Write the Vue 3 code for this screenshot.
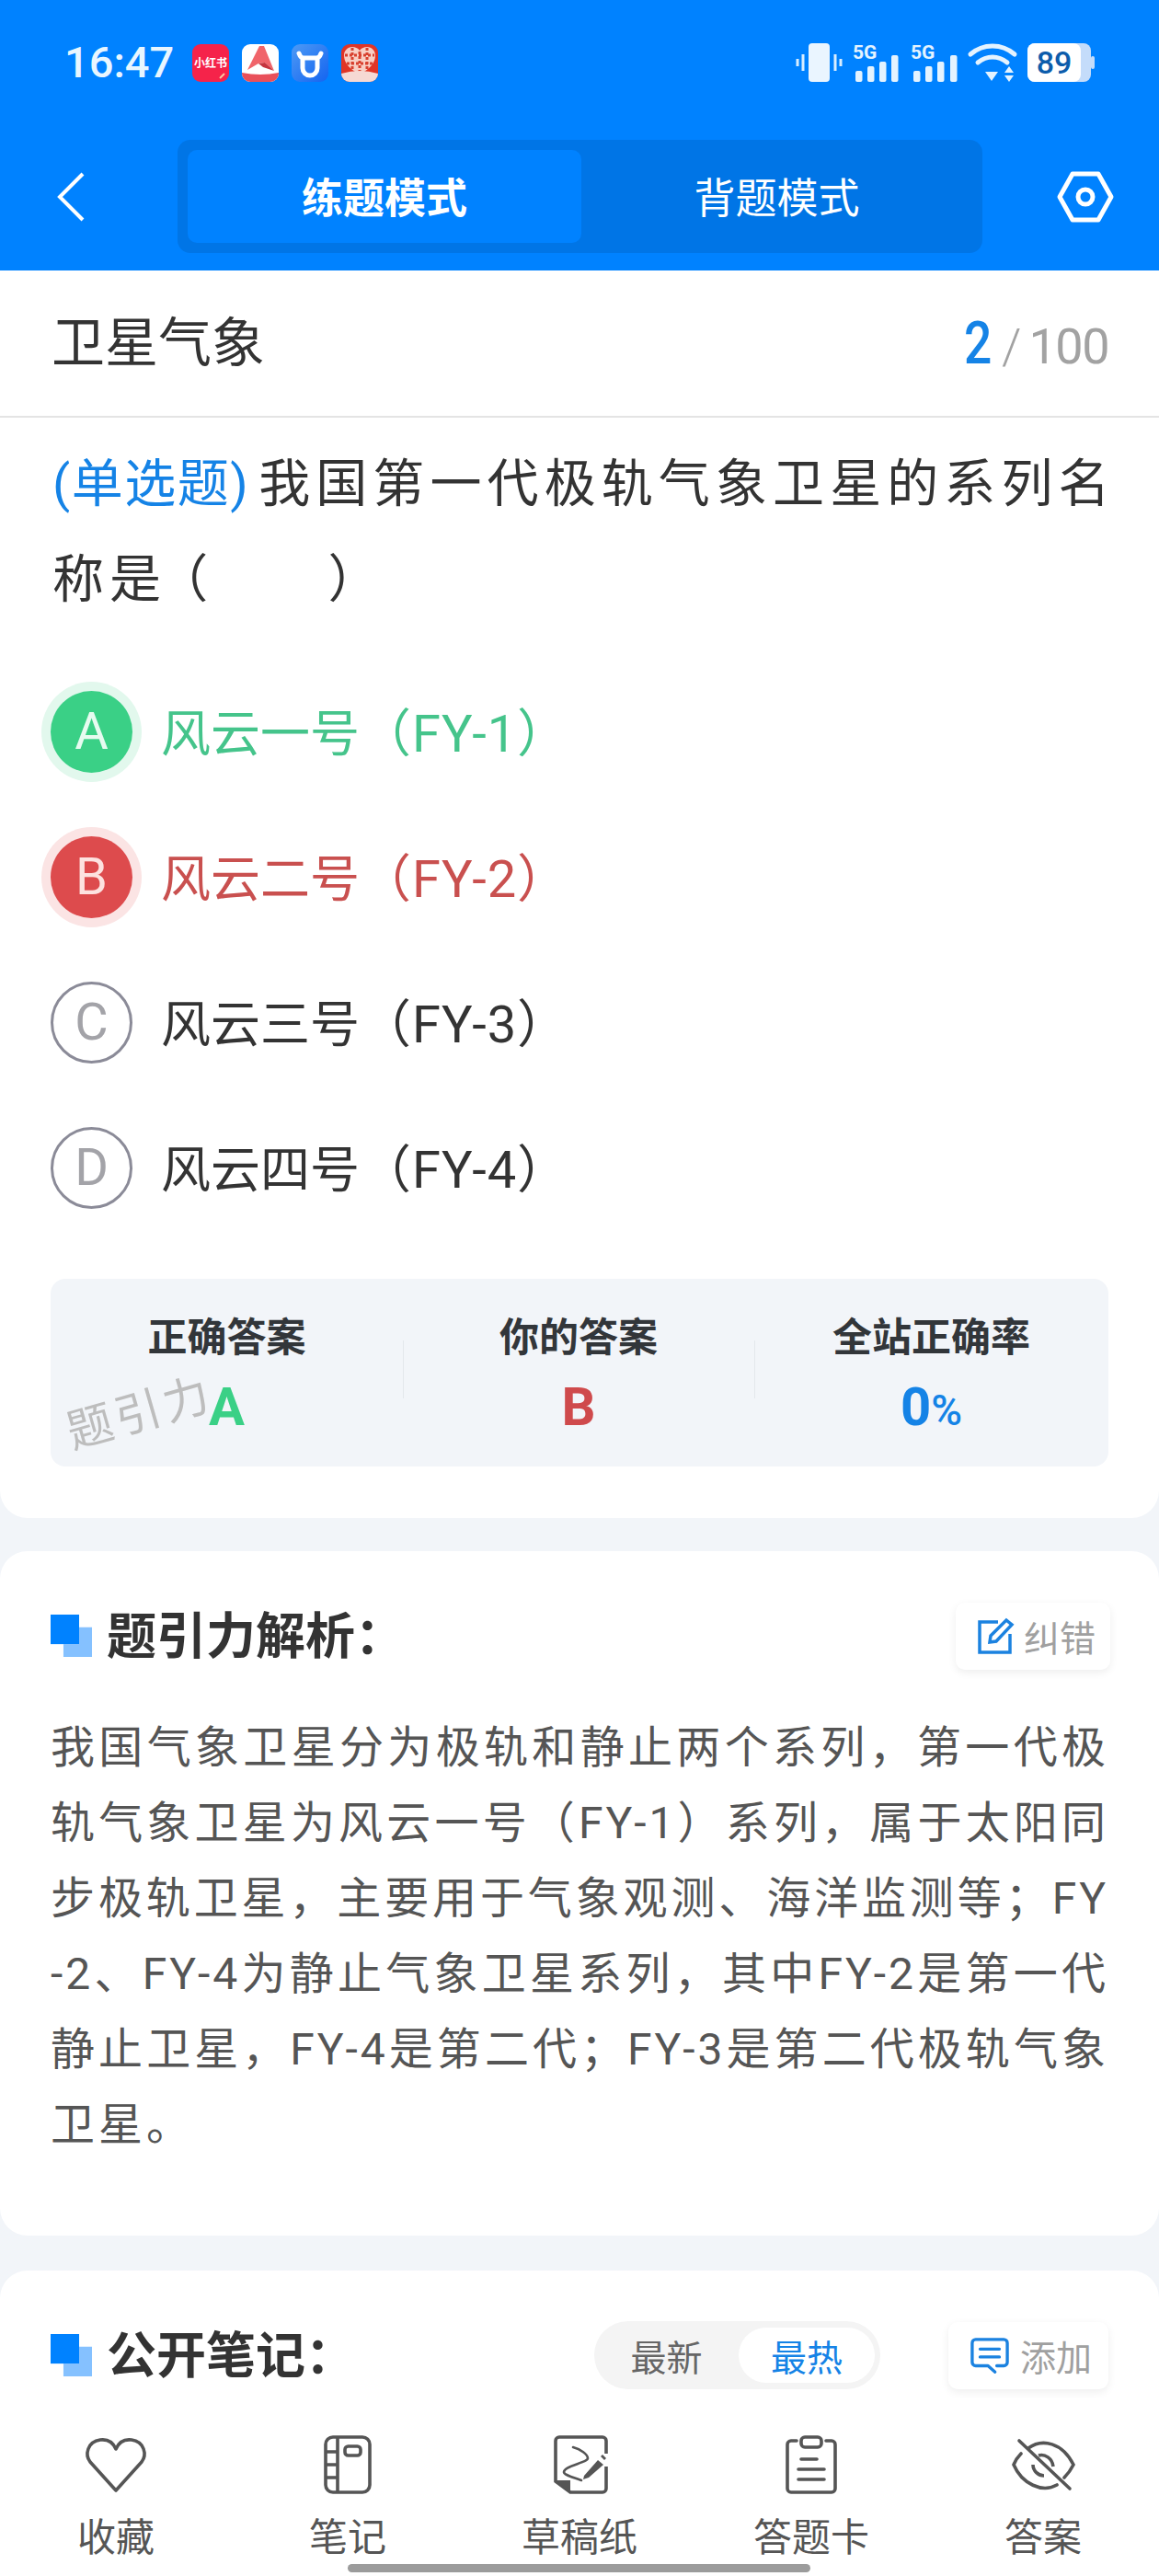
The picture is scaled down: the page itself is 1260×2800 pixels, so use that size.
<template>
  <div class="app">
    <header class="head">
      <div class="status">
        <span class="time">16:47</span>
        <div class="notifs">
          <svg class="notif" viewBox="0 0 40 41">
            <rect width="40" height="41" rx="9" fill="#f5234a" />
            <text x="20" y="25" text-anchor="middle" font-size="12" font-weight="700" fill="#fff" font-family="Noto Sans CJK SC">小红书</text>
            <path d="M30 37l5-5" stroke="#f8c9a0" stroke-width="2" />
          </svg>
          <svg class="notif" viewBox="0 0 40 41">
            <rect width="40" height="41" rx="9" fill="#fff" />
            <path d="M0 31q20 4 40 0v1a9 9 0 0 1-9 9H9a9 9 0 0 1-9-9z" fill="#e9505a" />
            <path d="M6 28 19 2h5l11 27-10-9-7 1z" fill="#f0646a" />
            <path d="M18 21l7-1 10 9-12-4z" fill="#c5343e" />
          </svg>
          <svg class="notif" viewBox="0 0 40 41">
            <defs>
              <linearGradient id="blueIcon" x1="0" y1="0" x2="1" y2="1">
                <stop offset="0" stop-color="#4d9af5" />
                <stop offset="1" stop-color="#1464f0" />
              </linearGradient>
            </defs>
            <rect width="40" height="41" rx="9" fill="url(#blueIcon)" />
            <path d="M8 10c1 3 3 5 5 5h14c2 0 4-2 5-5M12 15v11a8 8 0 0 0 16 0V15" fill="none" stroke="#fff" stroke-width="5" stroke-linecap="round" />
          </svg>
          <svg class="notif" viewBox="0 0 40 41">
            <rect width="40" height="41" rx="9" fill="#e03526" />
            <path d="M20 33C8 26 3 20 3 12c0-5 4-9 9-9 3 0 6 1 8 4 2-3 5-4 8-4 5 0 9 4 9 9 0 8-5 14-17 21z" fill="#f8cfc4" />
            <path d="M12 4v25M28 4v25M4 12h32M6 21h28M20 8v24" stroke="#d8412f" stroke-width="3" stroke-dasharray="3 2" />
            <path d="M0 32q20-6 40 0v0a9 9 0 0 1-9 9H9a9 9 0 0 1-9-9z" fill="#f6d9d3" />
          </svg>
        </div>
        <div class="sys">
          <svg class="sys-svg" viewBox="0 0 324 42">
            <rect x="13" y="0" width="23" height="42" rx="4" fill="#eaf5ff" />
            <path d="M7 12v18M1 17v8M42 12v18M48 17v8" stroke="#d8edff" stroke-width="3" />
            <text x="61" y="17" font-size="21" font-weight="700" fill="#e4f3ff" font-family="Roboto">5G</text>
            <g fill="#e4f3ff">
              <rect x="64" y="30" width="7.5" height="12" rx="2" />
              <rect x="77" y="25" width="7.5" height="17" rx="2" />
              <rect x="90" y="20" width="7.5" height="22" rx="2" />
              <rect x="103" y="13" width="7.5" height="29" rx="2" />
            </g>
            <text x="124" y="17" font-size="21" font-weight="700" fill="#e4f3ff" font-family="Roboto">5G</text>
            <g fill="#e4f3ff">
              <rect x="127" y="30" width="7.5" height="12" rx="2" />
              <rect x="140" y="25" width="7.5" height="17" rx="2" />
              <rect x="153" y="20" width="7.5" height="22" rx="2" />
              <rect x="167" y="13" width="7.5" height="29" rx="2" />
            </g>
            <path d="M189 12c14-12 34-12 48 0M197 21c10-8 22-8 32 0" fill="none" stroke="#e4f3ff" stroke-width="5" stroke-linecap="round" />
            <path d="M205 31h14l-7 10zM231 25l5 7h-10zM231 42l5-7h-10z" fill="#e4f3ff" />
            <rect x="251" y="0" width="69" height="42" rx="8" fill="#c4dcfa" />
            <rect x="251" y="0" width="58" height="42" rx="8" fill="#fff" />
            <rect x="320" y="14" width="4" height="14" rx="2" fill="#c4dcfa" />
            <text x="280" y="33" text-anchor="middle" font-size="34" font-weight="500" fill="#0c5cab" font-family="Roboto">89</text>
          </svg>
        </div>
      </div>
      <div class="bar">
        <svg class="back" viewBox="0 0 30 54"><path d="M28 2 3 27l25 25" fill="none" stroke="#fff" stroke-width="4" /></svg>
        <div class="tabs">
          <div class="tab active">练题模式</div>
          <div class="tab">背题模式</div>
        </div>
        <svg class="gear" viewBox="0 0 62 56">
          <path d="M17 3h28l14 25-14 25H17L3 28z" fill="none" stroke="#fff" stroke-width="5" stroke-linejoin="round" />
          <circle cx="31" cy="28" r="8" fill="none" stroke="#fff" stroke-width="5" />
        </svg>
      </div>
    </header>

    <main class="scroll">
      <section class="card first">
        <div class="title-row">
          <span class="subject">卫星气象</span>
          <span class="progress"><b>2</b><i>/</i><em>100</em></span>
        </div>
        <p class="question"><span class="qtype">(单选题)</span>我国第一代极轨气象卫星的系列名称是<span class="blank">（　　）</span></p>
        <div class="options">
          <div v-for="o in options" :key="o.key" class="option" :class="o.state">
            <span class="letter">{{ o.key }}</span>
            <span class="opt-text">{{ o.name }}<span class="opt-code">{{ o.code }}</span></span>
          </div>
        </div>
        <div class="stats">
          <div class="stat">
            <div class="stat-label">正确答案</div>
            <div class="stat-val green">A</div>
          </div>
          <div class="stat">
            <div class="stat-label">你的答案</div>
            <div class="stat-val red">B</div>
          </div>
          <div class="stat">
            <div class="stat-label">全站正确率</div>
            <div class="stat-val blue">0<small>%</small></div>
          </div>
          <span class="watermark">题引力</span>
        </div>
      </section>

      <section class="card analysis">
        <div class="sec-head">
          <span class="squares"></span>
          <h2>题引力解析：</h2>
          <div class="chip">
            <svg class="chip-icon" viewBox="0 0 40 40">
              <path d="M22 5H2v33h33V18" fill="none" stroke="#1b82e0" stroke-width="3.5" />
              <path d="M14 20 31 3l6 5-17 18-7 1z" fill="none" stroke="#1b82e0" stroke-width="3.5" />
            </svg>
            <span>纠错</span>
          </div>
        </div>
        <div class="para">
          <span v-for="(l, i) in lines" :key="i" class="line" :class="{ last: i === lines.length - 1 }">{{ l }}</span>
        </div>
      </section>

      <section class="card notes">
        <div class="sec-head">
          <span class="squares"></span>
          <h2>公开笔记：</h2>
          <div class="seg">
            <span class="seg-item">最新</span>
            <span class="seg-item on">最热</span>
          </div>
          <div class="chip add">
            <svg class="chip-icon wide" viewBox="0 0 44 44">
              <path d="M20 34H6a4 4 0 0 1-4-4V8a4 4 0 0 1 4-4h32a4 4 0 0 1 4 4v22a4 4 0 0 1-4 4h-8M20 34l8 7" fill="none" stroke="#1b82e0" stroke-width="3.5" stroke-linecap="round" stroke-linejoin="round" />
              <path d="M11 15h22M11 24h22" stroke="#1b82e0" stroke-width="3.5" stroke-linecap="round" />
            </svg>
            <span>添加</span>
          </div>
        </div>
      </section>
    </main>

    <nav class="nav">
      <div class="nav-item">
        <svg class="nav-icon" viewBox="0 0 70 66">
          <path d="M35 61 7 30C1 22 4 8 18 6c8-1 14 3 17 10 3-7 9-11 17-10 14 2 17 16 11 24z" fill="none" stroke="#555" stroke-width="3.6" stroke-linejoin="round" />
        </svg>
        <span>收藏</span>
      </div>
      <div class="nav-item">
        <svg class="nav-icon" viewBox="0 0 70 66">
          <rect x="11" y="3" width="48" height="60" rx="8" fill="none" stroke="#555" stroke-width="3.6" />
          <path d="M24 3v60M11 19h13M11 33h13M11 47h13" stroke="#555" stroke-width="3.6" />
          <rect x="32" y="13" width="17" height="10" rx="3.5" fill="none" stroke="#555" stroke-width="3.6" />
        </svg>
        <span>笔记</span>
      </div>
      <div class="nav-item">
        <svg class="nav-icon" viewBox="0 0 70 66">
          <path d="M64 21V7a4 4 0 0 0-4-4H13a4 4 0 0 0-4 4v44l16 12h35a4 4 0 0 0 4-4V35" fill="none" stroke="#555" stroke-width="3.6" />
          <path d="M10 50h15v14z" fill="#555" />
          <path d="M28 14c8 2 16 8 16 12 0 5-26 8-26 15 0 3 8 5 19 9" fill="none" stroke="#555" stroke-width="2.6" stroke-linecap="round" />
          <path d="M40 45 55 28l6 5-16 14-6 2zM58 24l2-2 4 4-2 2z" fill="#555" />
        </svg>
        <span>草稿纸</span>
      </div>
      <div class="nav-item">
        <svg class="nav-icon" viewBox="0 0 70 66">
          <path d="M19 7h-6a4 4 0 0 0-4 4v48a4 4 0 0 0 4 4h44a4 4 0 0 0 4-4V11a4 4 0 0 0-4-4h-6" fill="none" stroke="#555" stroke-width="3.6" stroke-linecap="round" />
          <rect x="24" y="3" width="22" height="11" rx="4" fill="none" stroke="#555" stroke-width="3.6" />
          <path d="M24 27h17M21 38h28M21 49h28" stroke="#555" stroke-width="3.6" stroke-linecap="round" />
        </svg>
        <span>答题卡</span>
      </div>
      <div class="nav-item">
        <svg class="nav-icon" viewBox="0 0 70 66">
          <path d="M9 7 64 59" stroke="#555" stroke-width="3.6" stroke-linecap="round" />
          <path d="M19 15C34 4 56 9 68 33c-3 6-6 10-10 14M50 55C34 64 12 54 3 33c2-5 5-9 8-12" fill="none" stroke="#555" stroke-width="3.6" stroke-linecap="round" />
          <path d="M30 23c7-2 15 3 16 12M24 33c0 7 6 12 12 12" fill="none" stroke="#555" stroke-width="3.6" />
        </svg>
        <span>答案</span>
      </div>
    </nav>
    <div class="home-bar"></div>
  </div>
</template>

<script setup>
const options = [
  { key: 'A', name: '风云一号', code: '（FY-1）', state: 'right' },
  { key: 'B', name: '风云二号', code: '（FY-2）', state: 'wrong' },
  { key: 'C', name: '风云三号', code: '（FY-3）', state: '' },
  { key: 'D', name: '风云四号', code: '（FY-4）', state: '' }
]

const lines = [
  '我国气象卫星分为极轨和静止两个系列，第一代极',
  '轨气象卫星为风云一号（FY-1）系列，属于太阳同',
  '步极轨卫星，主要用于气象观测、海洋监测等；FY',
  '-2、FY-4为静止气象卫星系列，其中FY-2是第一代',
  '静止卫星，FY-4是第二代；FY-3是第二代极轨气象',
  '卫星。'
]
</script>

<style>
body { background: #f2f5f9; }
</style>

<style scoped>
.app {
  width: 1260px; height: 2800px; position: relative; overflow: hidden;
  display: flex; flex-direction: column; background: #f2f5f9; color: #333;
  font-family: Roboto, "Noto Sans CJK SC", sans-serif;
}
.head { height: 294px; flex: none; background: #0082ff; color: #fff; }
.status { display: flex; align-items: center; height: 42px; padding: 47px 0 0 70px; }
.time { width: 139px; font-size: 47px; line-height: 42px; font-weight: 500; color: #e9f6ff; }
.notifs { display: flex; gap: 14px; }
.notif { width: 40px; height: 41px; display: block; }
.sys { margin-left: auto; margin-right: 70px; }
.sys-svg { width: 324px; height: 42px; display: block; overflow: visible; }
.bar { display: flex; align-items: center; height: 123px; margin-top: 63px; padding: 0 49px 0 62px; }
.back { width: 30px; height: 54px; flex: none; }
.tabs {
  width: 875px; height: 123px; box-sizing: border-box; margin-left: 101px; padding: 11px; flex: none;
  display: flex; background: #0075e6; border-radius: 14px;
}
.tab { width: 428px; display: flex; align-items: center; justify-content: center; font-size: 45px; padding-bottom: 2px; }
.tab.active { background: #0082ff; border-radius: 10px; font-weight: 700; }
.tab:last-child { flex: 1; }
.gear { width: 62px; height: 56px; margin-left: auto; flex: none; }

.scroll { flex: 1; min-height: 0; overflow: hidden; display: flex; flex-direction: column; gap: 36px; }
.card { background: #fff; border-radius: 30px; flex: none; }
.first { border-radius: 0 0 30px 30px; height: 1356px; }
.title-row {
  height: 158px; padding: 0 55px 0 56px; border-bottom: 2px solid #e4e4e4;
  display: flex; align-items: center; justify-content: space-between;
}
.subject { font-size: 58px; line-height: 1; color: #333; }
.progress { font-size: 54px; color: #a2a2a2; display: flex; align-items: baseline; }
.progress b { display: inline-block; width: 30px; font-size: 65px; font-weight: 500; color: #1583e6; transform: scaleX(0.82); transform-origin: left; }
.progress i { font-style: normal; margin: 0 8px 0 11px; font-weight: 300; }
.progress em { font-style: normal; letter-spacing: -1.5px; }
.question { margin: 20px 0 0; padding: 0 40px 0 57px; font-size: 56px; line-height: 104px; letter-spacing: 6.1px; color: #333; }
.qtype { color: #1583e6; letter-spacing: 1.5px; margin-right: 10px; }
.blank { margin-left: -11px; }
.options { margin-top: 34px; padding: 0 55px; }
.option { height: 158px; display: flex; align-items: center; gap: 31px; font-size: 54px; color: #333; }
.opt-text { padding-bottom: 6px; }
.opt-code { font-size: 56px; letter-spacing: 1px; }
.letter {
  width: 89px; height: 89px; box-sizing: border-box; border-radius: 50%; flex: none;
  display: flex; align-items: center; justify-content: center; font-size: 56px; font-weight: 400;
  border: 3px solid #8b8b98; color: #a3a3a8;
}
.right .letter { background: #3ad086; border: 0; color: #e6fbf0; box-shadow: 0 0 0 10px #e2f8ed; }
.right .opt-text { color: #45c48b; }
.wrong .letter { background: #dd4b4d; border: 0; color: #fde2e0; box-shadow: 0 0 0 10px #fbe4e4; }
.wrong .opt-text { color: #c9504f; }

.stats {
  position: relative; margin: 42px 55px 0; height: 204px; background: #f2f5f9; border-radius: 16px;
  display: grid; grid-template-columns: 383px 382px 385px;
}
.stat { position: relative; text-align: center; padding-top: 42px; }
.stat + .stat::before {
  content: ""; position: absolute; left: 0; top: 67px; height: 63px; width: 1px; background: #e4e8ec;
}
.stat-label { font-size: 43px; line-height: 44px; font-weight: 700; color: #32363a; }
.stat-val { font-size: 58px; line-height: 60px; margin-top: 23px; font-weight: 700; }
.stat-val small { font-size: 46px; font-weight: 500; }
.green { color: #3ad086; }
.red { color: #cf4a4c; }
.blue { color: #1583e6; }
.watermark {
  position: absolute; left: 16px; top: 116px; font-size: 50px; line-height: 60px; letter-spacing: 4px;
  color: #bdbdbd; transform: rotate(-16deg);
}

.analysis { height: 744px; }
.sec-head { display: flex; align-items: center; height: 74px; padding: 55px 53px 0 55px; }
.notes .sec-head { padding-right: 55px; }
.squares {
  width: 45px; height: 46px; flex: none; position: relative; background: #85c1ff;
  clip-path: polygon(0 0, 69% 0, 69% 30%, 100% 30%, 100% 100%, 31% 100%, 31% 70%, 0 70%);
}
.squares::before { content: ""; position: absolute; left: 0; top: 0; width: 31px; height: 32px; background: #0082ff; }
h2 { margin: 3px 0 0 16px; font-size: 54px; line-height: 74px; font-weight: 700; color: #333; }
.chip {
  margin-left: auto; height: 73px; width: 168px; box-sizing: border-box; padding-left: 24px; border-radius: 10px; background: #fff;
  box-shadow: 0 3px 10px rgba(0, 0, 0, 0.07); display: flex; align-items: center; gap: 10px;
  font-size: 39px; color: #a0a0a0;
}
.chip-icon { width: 40px; height: 40px; flex: none; }
.chip-icon.wide { width: 42px; height: 42px; }
.para { margin-top: 44px; padding: 0 55px; font-size: 48px; line-height: 82px; letter-spacing: 3px; color: #555; }
.line { display: block; text-align: justify; text-align-last: justify; }
.line.last { text-align-last: left; letter-spacing: 4px; }

.notes { min-height: 400px; margin-top: 2px; }
.seg {
  margin-left: auto; width: 311px; height: 74px; box-sizing: border-box; padding: 7px 6px 7px 0; border-radius: 37px;
  background: #f4f4f4; display: flex; font-size: 39px; color: #666;
}
.seg-item { flex: 1; display: flex; align-items: center; justify-content: center; border-radius: 30px; }
.seg-item.on { flex: none; width: 148px; background: #fff; color: #1583e6; }
.chip.add { margin-left: 74px; width: 174px; gap: 12px; }

.nav {
  position: absolute; left: 0; right: 0; bottom: 0; height: 177px; background: #fff;
  display: grid; grid-template-columns: repeat(5, 1fr);
}
.nav-item { display: flex; flex-direction: column; align-items: center; padding-top: 23px; font-size: 42px; line-height: 50px; color: #555; }
.nav-icon { width: 70px; height: 66px; margin-bottom: 22px; flex: none; }
.home-bar {
  position: absolute; left: 378px; top: 2787px; width: 503px; height: 9px; border-radius: 5px; background: #9c9c9c;
}
</style>
